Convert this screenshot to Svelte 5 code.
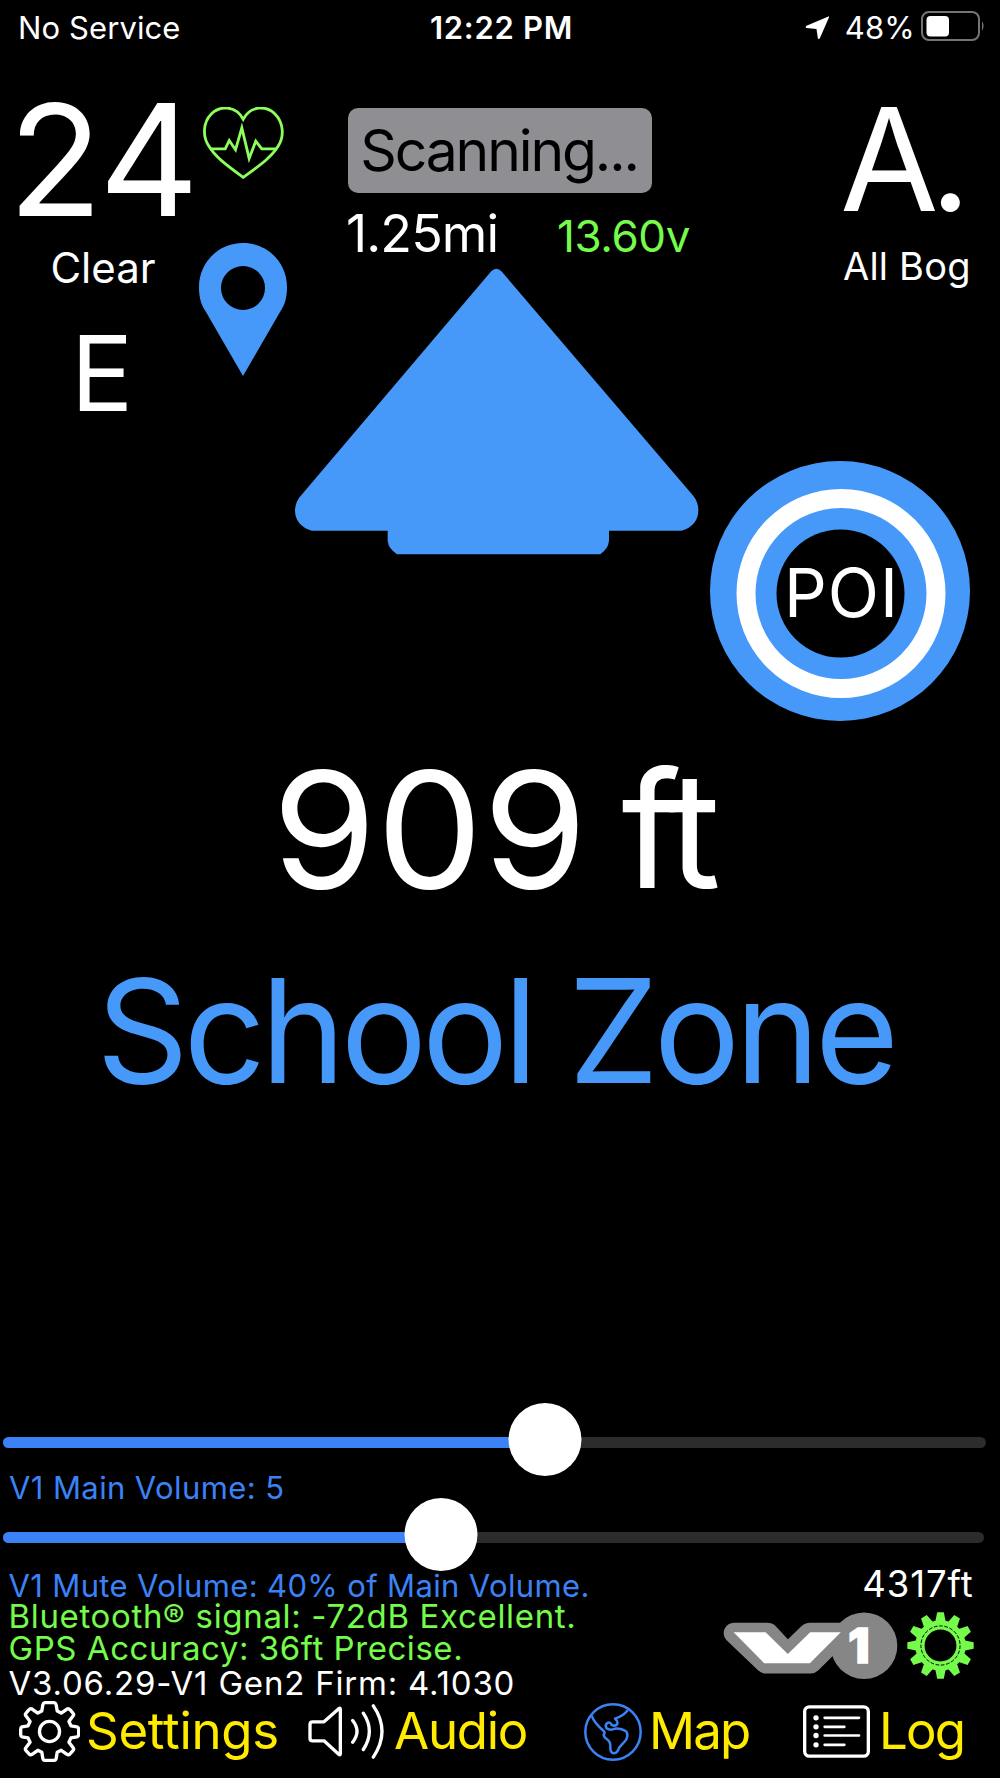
<script>
  const volume = { main: 5, mute: 40 };

  const lines = [
    { text: `V1 Mute Volume: ${volume.mute}% of Main Volume.`, kind: "mute" },
    { text: "Bluetooth® signal: -72dB Excellent.", kind: "bluetooth" },
    { text: "GPS Accuracy: 36ft Precise.", kind: "gps" },
    { text: "V3.06.29-V1 Gen2 Firm: 4.1030", kind: "firmware" }
  ];

  const teeth = Array.from({ length: 12 }, (_, i) => i * 30);
</script>

<div class="screen">
  <header class="statusbar">
    <span class="carrier">No Service</span>
    <span class="clock">12:22 PM</span>
    <span class="power">
      <svg class="location" viewBox="920 48 74 72">
        <path d="M988 50 Q993 47 991 53 L964 115 Q961 120 958 115 L954 87 L924 84 Q919 81 924 77 Z" fill="#fff" />
      </svg>
      <span class="percent">48%</span>
      <svg class="battery" viewBox="0 0 64 30">
        <rect x="1" y="1" width="57" height="28" rx="7" fill="none" stroke="#757575" stroke-width="2" />
        <rect x="5.5" y="5" width="22.5" height="20.5" rx="4" fill="#fff" />
        <path d="M61 10 Q64 15 61 20 Z" fill="#757575" />
      </svg>
    </span>
  </header>

  <main class="top">
    <div class="left">
      <div class="speed-row">
        <span class="speed">24</span>
        <svg class="heart" viewBox="607 319 244 217" fill="none" stroke="#8cff5a" stroke-width="8.5">
          <path d="M728 356 C706 314 658 314 632 340 C606 366 606 408 624 436 C646 474 692 504 728 531 C764 504 812 474 834 436 C852 408 850 366 824 340 C798 314 750 314 728 356 Z" />
          <path d="M629 445 H674 L686 420 L705 448 L724 382 L746 474 L766 422 L784 445 H829" />
        </svg>
      </div>
      <div class="heading-row">
        <div class="heading">
          <div class="sky">Clear</div>
          <div class="compass">E</div>
        </div>
        <svg class="pin" viewBox="0 0 88 134">
          <path fill-rule="evenodd" d="M44 0 C69 0 88 20 88 44 C88 54 86 62 81 69 L44 133 L7 69 C2 62 0 54 0 44 C0 20 19 0 44 0 Z M44 23 A22 22 0 1 0 44 67 A22 22 0 1 0 44 23 Z" fill="#4699f8" />
        </svg>
      </div>
    </div>

    <div class="center">
      <div class="badge">Scanning...</div>
      <div class="readings">
        <span class="miles">1.25mi</span>
        <span class="volts">13.60v</span>
      </div>
      <svg class="arrow" viewBox="46 54 1212 860">
        <path d="M634 64 Q650 48 666 64 L1240 736 Q1256 755 1256 780 Q1256 825 1206 842 H988 V872 Q986 896 962 912 H352 Q326 896 324 872 V842 H96 Q46 825 46 780 Q48 752 66 734 Z" fill="#4699f8" />
      </svg>
    </div>

    <div class="right">
      <div class="mode">A.</div>
      <div class="mode-name">All Bog</div>
      <div class="poi">
        <svg viewBox="0 0 260 260">
          <circle cx="130" cy="130" r="130" fill="#4699f8" />
          <circle cx="131" cy="132.5" r="95" fill="none" stroke="#fff" stroke-width="19" />
          <circle cx="130.5" cy="132.5" r="64" fill="#000" />
        </svg>
        <span class="poi-text">POI</span>
      </div>
    </div>
  </main>

  <div class="distance">
    <span class="value">909</span>
    <span class="unit">ft</span>
  </div>
  <div class="alert">School Zone</div>

  <section class="controls">
    <div class="slider">
      <div class="track"><div class="fill" style="width: 55.2%"></div></div>
      <div class="thumb" style="left: 545px"></div>
    </div>
    <div class="volume">V1 Main Volume: {volume.main}</div>
    <div class="slider second">
      <div class="track"><div class="fill" style="width: 44.7%"></div></div>
      <div class="thumb" style="left: 441px"></div>
    </div>
  </section>

  <section class="info">
    <div class="lines">
      {#each lines as line}
        <div class="line {line.kind}">{line.text}</div>
      {/each}
    </div>
    <div class="device">
      <div class="altitude">4317ft</div>
      <div class="logos">
        <svg class="v1" viewBox="666 156 526 204">
          <path d="M700 188 H798 Q814 188 824 198 L861 238 L900 200 Q912 188 928 188 H1020 L996 288 L952 332 Q942 341 930 341 H796 Q782 341 772 332 L676 240 Q664 226 670 208 Q678 188 700 188 Z" fill="#868686" />
          <circle cx="1090" cy="257" r="100" fill="#868686" />
          <path d="M698 217 H794 L861 282 L928 217 H1020 L927 310 H790 Z" fill="#fff" />
          <text x="1042" y="308">1</text>
        </svg>
        <svg class="cog" viewBox="-101 -101 202 202">
          {#each teeth as angle}
            <path d="M-16 -70 L-10 -100 H10 L16 -70 Z" fill="#75fb4c" transform="rotate({angle})" />
          {/each}
          <circle r="62" fill="none" stroke="#75fb4c" stroke-width="28" />
          <circle r="59" fill="none" stroke="#000" stroke-width="3" stroke-dasharray="11 5" />
        </svg>
      </div>
    </div>
  </section>

  <nav>
    <a class="item" href="#settings">
      <svg class="icon gear" viewBox="56 420 182 182" fill="none" stroke="#fff" stroke-width="10" stroke-linejoin="round">
        <path d="M133 425 H161 Q166 426 167 432 L170 450 L182 456 L199 444 Q204 441 208 446 L217 456 Q221 460 217 465 L205 481 L211 494 L229 497 Q234 499 234 504 V520 Q234 525 229 527 L211 530 L205 543 L217 559 Q221 564 217 568 L208 578 Q204 582 199 579 L182 567 L170 573 L167 591 Q166 597 161 597 H133 Q128 597 127 591 L124 573 L112 567 L95 579 Q90 582 86 578 L77 568 Q73 564 77 559 L89 543 L83 530 L65 527 Q61 525 61 520 V504 Q61 499 65 497 L83 494 L89 481 L77 465 Q73 460 77 456 L86 446 Q90 441 95 444 L112 456 L124 450 L127 432 Q128 426 133 425 Z" />
        <circle cx="147" cy="511" r="30" />
      </svg>
      <span class="settings">Settings</span>
    </a>
    <a class="item" href="#audio">
      <svg class="icon speaker" viewBox="924 430 228 170" fill="none" stroke="#fff" stroke-width="10" stroke-linecap="round" stroke-linejoin="round">
        <path d="M938 486 H972 L1017 446 Q1021 443 1021 448 V582 Q1021 587 1016 583 L972 543 H938 Q930 543 930 535 V494 Q930 486 938 486 Z" />
        <path d="M1058 482 Q1084 514 1058 547 M1090 460 Q1126 514 1090 569 M1120 438 Q1172 514 1120 592" />
      </svg>
      <span class="audio">Audio</span>
    </a>
    <a class="item" href="#map">
      <svg class="icon globe" viewBox="252 429 174 174" fill="none" stroke="#3b82f6" stroke-width="7.5" stroke-linejoin="round">
        <circle cx="339" cy="516" r="83" />
        <path d="M275 467 Q282 488 311 513 Q316 517 311 525 Q312 532 320 537 Q332 545 331 560 Q330 580 342 580 Q352 579 358 562 L378 540 Q386 524 378 514 Q362 503 345 506 Q330 513 319 504 Q314 493 324 488 Q331 486 334 494 Q346 501 352 492 Q354 484 345 476 Q370 468 384 450" />
      </svg>
      <span class="map">Map</span>
    </a>
    <a class="item" href="#log">
      <svg class="icon list" viewBox="908 437 201 158" fill="none" stroke="#fff" stroke-width="8" stroke-linecap="round">
        <rect x="913" y="442" width="191" height="148" rx="14" stroke-width="10" />
        <path d="M973 475 H1076 M973 502 H1032 M973 528 H1076 M973 556 H1032" />
        <path d="M947 475 h.1 M947 502 h.1 M947 528 h.1 M947 556 h.1" stroke-width="16" />
      </svg>
      <span class="log">Log</span>
    </a>
  </nav>
</div>

<style>
  :global(body) {
    background: #000;
  }

  .screen {
    display: flex;
    flex-direction: column;
    width: 1000px;
    height: 1778px;
    overflow: hidden;
    background: #000;
    color: #fff;
    font-family: Inter, "Liberation Sans", sans-serif;
    white-space: nowrap;
  }

  svg {
    display: block;
    flex: none;
  }

  .statusbar {
    display: grid;
    grid-template-columns: 1fr auto 1fr;
    align-items: center;
    height: 55px;
    padding: 0 15px 0 18px;
    box-sizing: border-box;
    font-size: 31px;
    line-height: 55px;
  }

  .carrier {
    letter-spacing: 0.1px;
  }

  .clock {
    font-weight: 600;
    letter-spacing: 0.7px;
  }

  .power {
    display: flex;
    align-items: center;
    justify-content: flex-end;
  }

  .location {
    width: 25px;
    height: 24px;
    margin-right: 15px;
  }

  .percent {
    letter-spacing: 0.2px;
  }

  .battery {
    width: 64px;
    height: 30px;
    margin: -3px 0 0 6px;
  }

  .top {
    display: grid;
    grid-template-columns: 290px 420px 290px;
    height: 693px;
  }

  .left,
  .right {
    padding-top: 34px;
  }

  .speed-row,
  .heading-row {
    display: flex;
    align-items: flex-start;
  }

  .speed-row {
    height: 140px;
    margin-bottom: 14px;
  }

  .speed {
    width: 195px;
    padding-left: 8px;
    font-size: 155px;
    line-height: 141px;
    letter-spacing: -1px;
  }

  .heart {
    width: 81px;
    height: 72px;
    margin-top: 18px;
  }

  .heading {
    width: 192px;
    padding-left: 7px;
    text-align: center;
  }

  .sky {
    font-size: 42px;
    line-height: 50px;
  }

  .compass {
    margin: 30px 2px 0 0;
    font-size: 104px;
    line-height: 100px;
  }

  .pin {
    width: 88px;
    height: 134px;
  }

  .center {
    padding-top: 53px;
  }

  .badge {
    width: 304px;
    height: 85px;
    margin: 0 auto;
    padding-right: 2px;
    box-sizing: border-box;
    border-radius: 10px;
    background: #8e8e93;
    color: #000;
    font-size: 57px;
    line-height: 86px;
    text-align: center;
    letter-spacing: -2.1px;
  }

  .readings {
    display: flex;
    align-items: baseline;
    height: 50px;
    margin-top: 16px;
    padding-left: 56px;
    line-height: 50px;
  }

  .miles {
    width: 211px;
    font-size: 52px;
    letter-spacing: -0.9px;
  }

  .volts {
    color: #75fb4c;
    font-size: 44px;
    letter-spacing: -0.4px;
  }

  .arrow {
    width: 404px;
    height: 287px;
    margin: 9px 0 0 5px;
  }

  .mode {
    padding-left: 130px;
    font-size: 143px;
    line-height: 140px;
    letter-spacing: -9px;
  }

  .mode-name {
    margin-top: 17px;
    padding-left: 133px;
    font-size: 38px;
    line-height: 40px;
    letter-spacing: 0.2px;
  }

  .poi {
    display: grid;
    width: 260px;
    height: 260px;
    margin-top: 175px;
  }

  .poi svg,
  .poi-text {
    grid-area: 1 / 1;
  }

  .poi-text {
    padding: 2px 0 0 3px;
    font-size: 67px;
    line-height: 260px;
    text-align: center;
    letter-spacing: 1px;
  }

  .distance {
    display: flex;
    justify-content: center;
    gap: 46px;
    padding-right: 15px;
    font-size: 162px;
    line-height: 162px;
  }

  .value {
    transform: scaleX(1.04);
    transform-origin: left;
  }

  .unit {
    letter-spacing: -8px;
  }

  .alert {
    margin-top: 46px;
    padding-right: 10px;
    color: #4699f8;
    font-size: 144px;
    line-height: 150px;
    text-align: center;
    letter-spacing: -5.1px;
  }

  .controls {
    margin-top: 298px;
    color: #3b82f6;
  }

  .slider {
    position: relative;
    height: 72px;
    padding: 33px 14px 0 3px;
    box-sizing: border-box;
  }

  .slider.second {
    padding-right: 16px;
  }

  .track {
    height: 11px;
    border-radius: 6px;
    background: #2c2c2e;
    overflow: hidden;
  }

  .fill {
    height: 100%;
    background: #3b82f6;
  }

  .thumb {
    position: absolute;
    top: -1px;
    width: 73px;
    height: 73px;
    border-radius: 50%;
    background: #fff;
    transform: translateX(-50%);
  }

  .volume {
    padding-left: 9px;
    font-size: 31px;
    line-height: 23px;
    letter-spacing: 0.4px;
  }

  .info {
    display: flex;
    justify-content: space-between;
    height: 131px;
  }

  .lines {
    padding-left: 8.5px;
    font-size: 33px;
    letter-spacing: 0.6px;
  }

  .mute {
    color: #3b82f6;
    font-size: 31px;
    line-height: 30px;
    letter-spacing: 0.36px;
  }

  .bluetooth,
  .gps {
    color: #75fb4c;
  }

  .bluetooth {
    line-height: 31px;
    letter-spacing: 0.66px;
  }

  .gps {
    line-height: 33px;
    letter-spacing: 0.55px;
  }

  .firmware {
    line-height: 37px;
    letter-spacing: 0.8px;
  }

  .device {
    padding-right: 26.5px;
  }

  .altitude {
    font-size: 36.5px;
    line-height: 26px;
    text-align: right;
    letter-spacing: 0.9px;
  }

  .logos {
    display: flex;
    gap: 9px;
    margin-top: 15px;
  }

  .v1 {
    width: 175px;
    height: 68px;
  }

  .v1 text {
    fill: #fff;
    stroke: #fff;
    stroke-width: 4px;
    font-size: 144px;
    font-weight: 900;
  }

  .cog {
    width: 67px;
    height: 67px;
  }

  nav {
    display: grid;
    grid-template-columns: 289px 276px 219px 1fr;
    align-items: center;
    height: 60px;
    margin-top: -1px;
    padding-left: 19px;
  }

  .item {
    display: flex;
    align-items: center;
    color: #ffeb00;
    font-size: 51px;
    line-height: 58px;
    text-decoration: none;
  }

  .item span {
    padding-bottom: 2px;
  }

  .gear {
    width: 61px;
    height: 61px;
    margin-right: 6px;
  }

  .speaker {
    width: 76px;
    height: 57px;
    margin-right: 10px;
  }

  .globe {
    width: 58px;
    height: 58px;
    margin-right: 7px;
  }

  .list {
    width: 67px;
    height: 53px;
    margin-right: 9px;
  }

  .settings {
    letter-spacing: -0.3px;
  }

  .audio {
    letter-spacing: -1.3px;
  }

  .map,
  .log {
    letter-spacing: -1.8px;
  }
</style>
